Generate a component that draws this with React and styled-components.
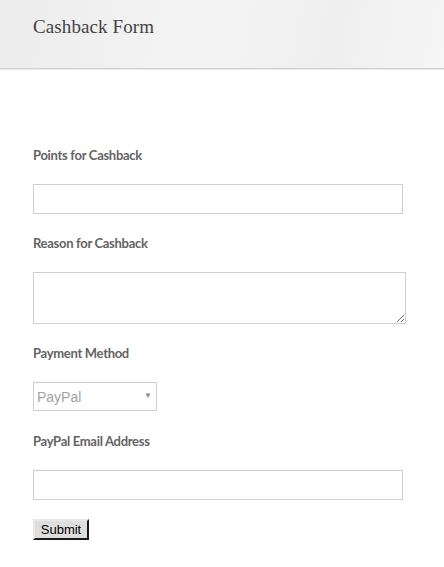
import React from 'react';
import styled, { createGlobalStyle } from 'styled-components';

const GlobalStyle = createGlobalStyle`
  body {
    margin: 0;
    background: #fff;
    font-family: 'Liberation Sans', Arial, sans-serif;
  }
`;

const Header = styled.header`
  height: 68px;
  display: flex;
  align-items: center;
  padding: 0 33px;
  background: linear-gradient(100deg, #ececec 0%, #f4f4f4 45%, #efefef 75%, #f6f6f6 100%);
  border-bottom: 1px solid #d2d2d2;
  box-shadow: 0 1px 0 #e8e8e8;
`;

const Title = styled.h1`
  margin: 0 0 14px;
  font-family: 'Liberation Serif', 'DejaVu Serif', serif;
  font-weight: 400;
  font-size: 19px;
  color: #444;
  letter-spacing: 0.1px;
`;

const Form = styled.form`
  display: flex;
  flex-direction: column;
  align-items: flex-start;
  padding: 76px 33px 0;
`;

const Field = styled.div`
  display: flex;
  flex-direction: column;
  align-items: flex-start;
  margin-bottom: ${(p) => p.$gap || 19}px;
`;

const Label = styled.label`
  display: block;
  height: 20px;
  line-height: 20px;
  margin-bottom: 19px;
  font-family: Lato, 'Noto Sans', sans-serif;
  font-weight: 700;
  font-size: 13px;
  letter-spacing: -0.3px;
  color: #636363;
`;

const TextInput = styled.input`
  box-sizing: border-box;
  width: ${(p) => p.$width}px;
  height: 30px;
  margin: 0;
  padding: 4px 6px;
  border: 1px solid #cfcfcf;
  background: #fff;
  font-family: 'Liberation Sans', Arial, sans-serif;
  font-size: 14px;
  outline: none;
`;

const TextArea = styled.textarea`
  box-sizing: border-box;
  width: 373px;
  height: 52px;
  margin: 0;
  padding: 4px 6px;
  border: 1px solid #cfcfcf;
  background: #fff;
  font-family: 'Liberation Sans', Arial, sans-serif;
  font-size: 14px;
  outline: none;
  vertical-align: top;
`;

const SelectWrap = styled.div`
  position: relative;
  width: 124px;
  height: 29px;
`;

const Select = styled.select`
  appearance: none;
  box-sizing: border-box;
  width: 100%;
  height: 100%;
  margin: 0;
  padding: 0 0 0 3px;
  border: 1px solid #cfcfcf;
  border-radius: 0;
  background: #fff;
  font-family: 'Liberation Sans', Arial, sans-serif;
  font-size: 14px;
  color: #a3a3a3;
  outline: none;
`;

const Caret = styled.span`
  position: absolute;
  right: 5px;
  top: 9px;
  font-size: 8px;
  line-height: 10px;
  color: #8a8a8a;
  pointer-events: none;
`;

const SubmitButton = styled.button`
  box-sizing: border-box;
  width: 56px;
  height: 21px;
  padding: 0;
  background: #dedede;
  border: 2px outset #e8e8e8;
  border-right-color: #6f6f6f;
  border-bottom-color: #6f6f6f;
  font-family: 'Liberation Sans', Arial, sans-serif;
  font-size: 13px;
  color: #000;
`;

export default function App() {
  return (
    <>
      <GlobalStyle />
      <Header>
        <Title>Cashback Form</Title>
      </Header>
      <Form onSubmit={(e) => e.preventDefault()}>
        <Field>
          <Label>Points for Cashback</Label>
          <TextInput type="text" $width={370} />
        </Field>
        <Field>
          <Label>Reason for Cashback</Label>
          <TextArea />
        </Field>
        <Field $gap={20}>
          <Label>Payment Method</Label>
          <SelectWrap>
            <Select defaultValue="paypal">
              <option value="paypal">PayPal</option>
            </Select>
            <Caret>▼</Caret>
          </SelectWrap>
        </Field>
        <Field>
          <Label>PayPal Email Address</Label>
          <TextInput type="text" $width={370} />
        </Field>
        <SubmitButton type="submit">Submit</SubmitButton>
      </Form>
    </>
  );
}
